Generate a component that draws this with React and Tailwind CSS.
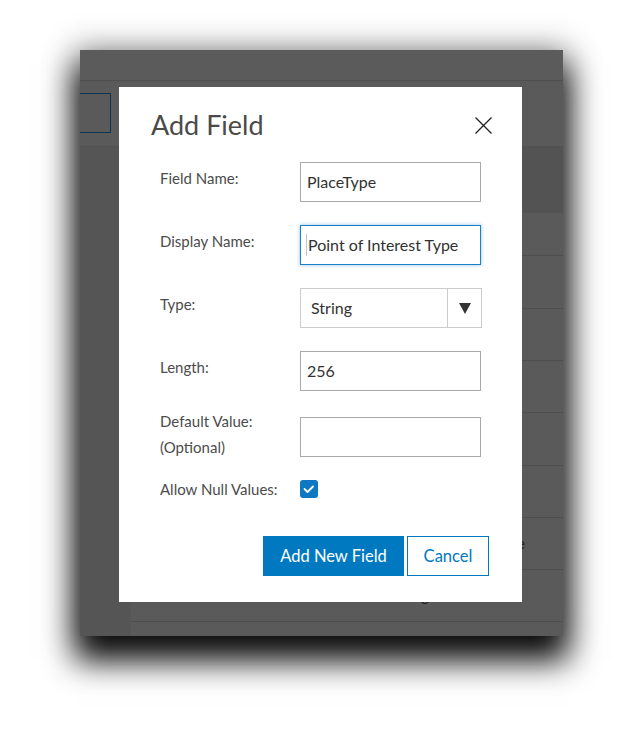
export default function App() {
  const label = "w-[140px] text-[15px] leading-[26px] text-[#4c4c4c] mb-[8px]";
  const input =
    "w-[181px] h-[40px] border border-[#a9a9a9] px-[6px] flex items-center text-[16px] text-[#323232]";
  return (
    <div className="min-h-[746px] w-[643px] bg-white pt-[50px] pl-[80px] font-['Lato','Noto_Sans',sans-serif]">
      <div className="relative w-[483px] h-[586px] bg-[#5a5a5a] flex flex-col overflow-hidden shadow-[0_20px_30px_5px_rgba(0,0,0,0.95),0_0_30px_5px_rgba(0,0,0,0.25)]">
        {/* background app (dimmed) */}
        <div className="h-[31px] border-b border-[#4f4f4f] bg-[#5b5b5b]" />
        <div className="h-[66px] border-b border-[#525252] flex">
          <div className="ml-[-10px] mt-[12px] w-[41px] h-[40px] border border-[#0c3552]" />
        </div>
        <div className="flex flex-1">
          <div className="w-[51px] bg-[#555555]" />
          <div className="flex-1 flex flex-col text-[15px] text-[#1e1e1e]">
            <div className="h-[66px] bg-[#535353]" />
            <div className="h-[43px] border-b border-[#4e4e4e]" />
            <div className="h-[53px] border-b border-[#4e4e4e]" />
            <div className="h-[52px] border-b border-[#4e4e4e]" />
            <div className="h-[52px] border-b border-[#4e4e4e]" />
            <div className="h-[53px] border-b border-[#4e4e4e]" />
            <div className="h-[52px] border-b border-[#4e4e4e]" />
            <div className="h-[52px] border-b border-[#4e4e4e] flex items-center justify-end pr-[38px]">
              Type
            </div>
            <div className="h-[52px] border-b border-[#4e4e4e] flex items-center pl-[266px]">
              Long
            </div>
            <div className="flex-1" />
          </div>
        </div>

        {/* dialog */}
        <div className="absolute left-[39px] top-[37px] w-[403px] h-[515px] bg-white flex flex-col pt-[20px]">
          <div className="flex items-center justify-between pl-[32px] pr-[30px] h-[36px]">
            <h2 className="text-[27px] leading-[36px] text-[#4a4a4a]">Add Field</h2>
            <svg width="17" height="17" viewBox="0 0 17 17" fill="none">
              <path d="M0.5 0.5L16.5 16.5M16.5 0.5L0.5 16.5" stroke="#222" strokeWidth="1.3" />
            </svg>
          </div>

          <div className="mt-[19px] flex items-center pl-[41px]">
            <div className={label}>Field Name:</div>
            <div className={input}>PlaceType</div>
          </div>

          <div className="mt-[23px] flex items-center pl-[41px]">
            <div className={label}>Display Name:</div>
            <div className="w-[181px] h-[40px] border border-[#1a7fc7] shadow-[0_0_4px_rgba(0,121,193,0.45)] px-[5px] flex items-center text-[16px] text-[#323232]">
              <span className="w-px h-[22px] bg-[#c4c4c4] mr-px" />
              Point of Interest Type
            </div>
          </div>

          <div className="mt-[23px] flex items-center pl-[41px]">
            <div className={label}>Type:</div>
            <div className="w-[182px] h-[40px] border border-[#cccccc] flex items-center text-[16px] text-[#323232]">
              <div className="flex-1 pl-[10px]">String</div>
              <div className="w-[34px] h-full border-l border-[#cccccc] flex items-center justify-center">
                <svg width="12" height="11" viewBox="0 0 12 11">
                  <path d="M0 0H12L6 11Z" fill="#333" />
                </svg>
              </div>
            </div>
          </div>

          <div className="mt-[23px] flex items-center pl-[41px]">
            <div className={label}>Length:</div>
            <div className={input}>256</div>
          </div>

          <div className="mt-[17px] flex items-center pl-[41px]">
            <div className="w-[140px] text-[15px] leading-[26px] text-[#4c4c4c] mb-[5px]">
              Default Value:
              <br />
              (Optional)
            </div>
            <div className={input} />
          </div>

          <div className="mt-[11px] flex items-center pl-[41px]">
            <div className="w-[140px] text-[15px] leading-[26px] text-[#4c4c4c]">Allow Null Values:</div>
            <div className="w-[18px] h-[18px] rounded-[3px] bg-[#0e78c2] flex items-center justify-center">
              <svg width="18" height="18" viewBox="0 0 18 18" fill="none">
                <path d="M4.5 9L7.5 12L13 6.5" stroke="white" strokeWidth="1.8" strokeLinecap="round" strokeLinejoin="round" />
              </svg>
            </div>
          </div>

          <div className="mt-[34px] flex justify-end gap-[3px] pr-[33px]">
            <button className="w-[141px] h-[40px] bg-[#0079c1] text-white text-[16.5px]">Add New Field</button>
            <button className="w-[82px] h-[40px] border border-[#0079c1] text-[#0079c1] text-[16.5px] bg-white">
              Cancel
            </button>
          </div>
        </div>
      </div>
    </div>
  );
}
